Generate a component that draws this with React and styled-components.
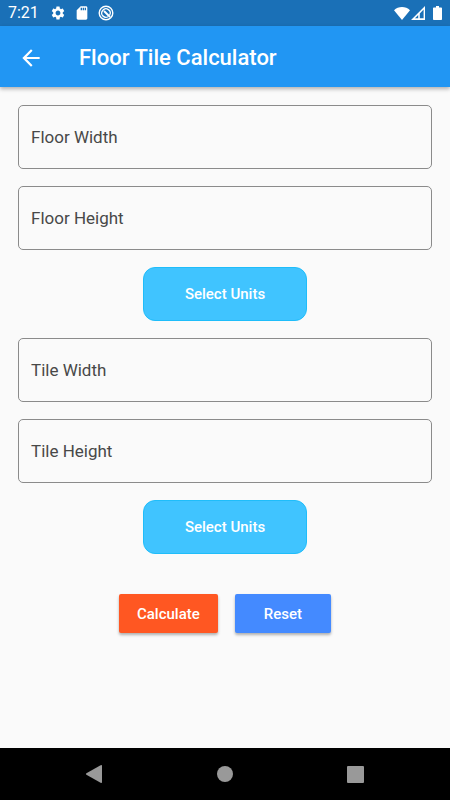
import { useState } from 'react'
import styled, { createGlobalStyle } from 'styled-components'
import { MdArrowBack, MdSettings, MdSdCard } from 'react-icons/md'

const GlobalStyle = createGlobalStyle`
    * {
        box-sizing: border-box;
    }
    body {
        margin: 0;
        background-color: #fafafa;
        font-family: Roboto, "Liberation Sans", sans-serif;
    }
`

const Screen = styled.div`
    min-height: 100vh;
    display: flex;
    flex-direction: column;
`

const StatusBar = styled.div`
    height: 26px;
    padding: 0 8px;
    display: flex;
    align-items: center;
    justify-content: space-between;
    background-color: #1a70b7;
    color: #fff;
`

const StatusGroup = styled.div`
    display: flex;
    align-items: center;
    gap: ${({ $gap }) => $gap}px;
`

const Clock = styled.span`
    margin-right: 3px;
    font-size: 16px;
    line-height: 26px;
`

const AppBar = styled.header`
    height: 61px;
    padding: 2px 18px 0;
    display: flex;
    align-items: center;
    gap: 35px;
    background-color: #2196f3;
    box-shadow: 0 2px 4px rgba(0, 0, 0, 0.3);
    color: #fff;
`

const BackButton = styled.button`
    display: flex;
    padding: 0;
    border: 0;
    background: none;
    color: inherit;
    cursor: pointer;
`

const Title = styled.h1`
    margin: 0;
    font-size: 22px;
    line-height: 28px;
    font-weight: 500;
`

const Form = styled.form`
    flex: 1;
    padding: 18px 18px 16px;
    display: flex;
    flex-direction: column;
    align-items: center;
    gap: 17px;
`

const FieldBox = styled.div`
    width: 100%;
    height: 64px;
    display: grid;
    align-items: center;
    border: 1px solid #8b8b8b;
    border-radius: 5px;

    &:focus-within {
        border-color: #2196f3;
    }
`

const FieldInput = styled.input`
    grid-area: 1 / 1;
    width: 100%;
    height: 100%;
    padding: 16px 12px 0;
    border: 0;
    outline: 0;
    background: none;
    color: #222;
    font: inherit;
    font-size: 17px;
`

const FieldLabel = styled.label`
    grid-area: 1 / 1;
    padding: 0 12px;
    color: #484848;
    font-size: 17px;
    line-height: 24px;
    pointer-events: none;

    ${FieldInput}:focus + &,
    ${FieldInput}:not(:placeholder-shown) + & {
        align-self: start;
        font-size: 13px;
    }
`

const UnitsButton = styled.button`
    width: 164px;
    height: 54px;
    border: 1px solid #1fbdfa;
    border-radius: 12px;
    background-color: #40c4ff;
    color: #fff;
    font: inherit;
    font-size: 15px;
    font-weight: 500;
    cursor: pointer;
`

const Actions = styled.div`
    padding-top: 23px;
    display: flex;
    gap: 17px;
`

const ActionButton = styled.button`
    height: 39px;
    padding: 0 ${({ $pad }) => $pad}px;
    border: 0;
    border-radius: 2px;
    background-color: ${({ $color }) => $color};
    box-shadow: 0 2px 3px rgba(0, 0, 0, 0.3);
    color: #fff;
    font: inherit;
    font-size: 15px;
    font-weight: 500;
    cursor: pointer;
`

const NavBar = styled.nav`
    height: 52px;
    padding: 0 29px;
    display: flex;
    align-items: center;
    background-color: #000;
`

const NavButton = styled.button`
    flex: 1;
    height: 100%;
    display: flex;
    align-items: center;
    justify-content: center;
    padding: 0;
    border: 0;
    background: none;
    color: #999;
    cursor: pointer;
`

const SyncIcon = () => (
    <svg width="16" height="16" viewBox="0 0 16 16" fill="none" stroke="currentColor">
        <circle cx="8" cy="8" r="6.8" strokeWidth="1.4" />
        <path d="M5.200 11.200A4.200 4.200 0 1 1 11.600 10.200" strokeWidth="1.300" />
        <path d="M6 6L12 12" strokeWidth="2" />
        <path d="M5 11A4.200 4.200 0 0 0 10 11.700" strokeWidth="1.300" />
    </svg>
)

const WifiIcon = () => (
    <svg width="16" height="13" viewBox="0 0 16 13" fill="currentColor">
        <path d="M8 13L0 3.200C2.200 1 5 0 8 0s5.800 1 8 3.200z" />
    </svg>
)

const SignalIcon = () => (
    <svg width="14" height="14" viewBox="0 0 14 14">
        <path fill="currentColor" fillRule="evenodd" d="M14 0v14H0zM12.600 3.600L8.800 7.400v4.800h3.800zM7.200 9L4 12.200h3.200z" />
    </svg>
)

const BatteryIcon = () => (
    <svg width="9" height="14" viewBox="0 0 9 14" fill="currentColor">
        <path d="M3 0h3v1.500h2.200a.8.8 0 0 1 .8.8v10.900a.8.8 0 0 1-.8.8H.8a.8.8 0 0 1-.8-.8V2.300a.8.8 0 0 1 .8-.8H3z" />
    </svg>
)

const BackTriangle = () => (
    <svg width="18" height="20" viewBox="0 0 18 20" fill="currentColor">
        <path d="M15.600 1.300Q17 .600 17 2v16q0 1.400-1.400.7L1.400 10.700Q.400 10 1.400 9.300z" />
    </svg>
)

const HomeCircle = () => (
    <svg width="16" height="16" viewBox="0 0 16 16" fill="currentColor">
        <circle cx="8" cy="8" r="8" />
    </svg>
)

const RecentSquare = () => (
    <svg width="17" height="17" viewBox="0 0 17 17" fill="currentColor">
        <rect width="17" height="17" rx="1" />
    </svg>
)

const emptyValues = { floorWidth: '', floorHeight: '', tileWidth: '', tileHeight: '' }

const Field = ({ id, label, values, onChange }) => (
    <FieldBox>
        <FieldInput
            id={id}
            inputMode="decimal"
            placeholder=" "
            value={values[id]}
            onChange={(e) => onChange({ ...values, [id]: e.target.value })}
        />
        <FieldLabel htmlFor={id}>{label}</FieldLabel>
    </FieldBox>
)

const App = () => {
    const [values, setValues] = useState(emptyValues)

    return (<>
        <GlobalStyle />
        <Screen>
            <StatusBar>
                <StatusGroup $gap={8}>
                    <Clock>7:21</Clock>
                    <MdSettings size={16} />
                    <MdSdCard size={16} />
                    <SyncIcon />
                </StatusGroup>
                <StatusGroup $gap={8}>
                    <StatusGroup $gap={1}>
                        <WifiIcon />
                        <SignalIcon />
                    </StatusGroup>
                    <BatteryIcon />
                </StatusGroup>
            </StatusBar>

            <AppBar>
                <BackButton type="button" aria-label="Back">
                    <MdArrowBack size={26} />
                </BackButton>
                <Title>Floor Tile Calculator</Title>
            </AppBar>

            <Form onSubmit={(e) => e.preventDefault()}>
                <Field id="floorWidth" label="Floor Width" values={values} onChange={setValues} />
                <Field id="floorHeight" label="Floor Height" values={values} onChange={setValues} />
                <UnitsButton type="button">Select Units</UnitsButton>
                <Field id="tileWidth" label="Tile Width" values={values} onChange={setValues} />
                <Field id="tileHeight" label="Tile Height" values={values} onChange={setValues} />
                <UnitsButton type="button">Select Units</UnitsButton>
                <Actions>
                    <ActionButton type="submit" $color="#ff5722" $pad={18}>Calculate</ActionButton>
                    <ActionButton type="button" $color="#448aff" $pad={29} onClick={() => setValues(emptyValues)}>
                        Reset
                    </ActionButton>
                </Actions>
            </Form>

            <NavBar>
                <NavButton type="button" aria-label="Back"><BackTriangle /></NavButton>
                <NavButton type="button" aria-label="Home"><HomeCircle /></NavButton>
                <NavButton type="button" aria-label="Recent apps"><RecentSquare /></NavButton>
            </NavBar>
        </Screen>
    </>)
}

export default App
